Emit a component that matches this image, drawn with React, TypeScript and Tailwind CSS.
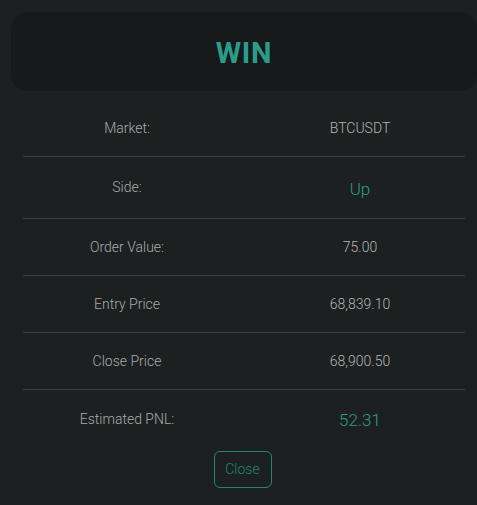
import React from 'react';

const rows: { label: string; value: string; accent?: boolean; h: string }[] = [
    { label: 'Market:', value: 'BTCUSDT', h: 'h-[56px]' },
    { label: 'Side:', value: 'Up', accent: true, h: 'h-[62px]' },
    { label: 'Order Value:', value: '75.00', h: 'h-[57px]' },
    { label: 'Entry Price', value: '68,839.10', h: 'h-[57px]' },
    { label: 'Close Price', value: '68,900.50', h: 'h-[57px]' },
    { label: 'Estimated PNL:', value: '52.31', accent: true, h: 'h-[58px]' },
];

const App: React.FC = () => {
    return (
        <div className="w-[477px] h-[505px] bg-[#1d2021] font-['Roboto',sans-serif] overflow-hidden">
            <div className="pt-3 pl-[11px]">
                <div className="h-[79px] rounded-2xl bg-[#18191a] flex items-center justify-center pt-1">
                    <span className="text-[29px] font-bold text-[#2a9d8a] tracking-wide">WIN</span>
                </div>
            </div>
            <div className="mx-[23px] w-[442px] mt-[10px]">
                {rows.map((r, i) => (
                    <div
                        key={r.label}
                        className={`grid grid-cols-[208px_1fr] items-center ${r.h} ${i < rows.length - 1 ? 'border-b border-[#3b3e3f]' : ''}`}
                    >
                        <div className="text-center text-[14px] text-[#a9aaaa] font-light">{r.label}</div>
                        <div
                            className={
                                r.accent
                                    ? 'text-center pl-6 text-[17px] text-[#2a9d8a] font-light pt-1'
                                    : 'text-center pl-6 text-[14px] text-[#b5b5b5] font-light'
                            }
                        >
                            {r.value}
                        </div>
                    </div>
                ))}
            </div>
            <div className="flex justify-center mt-[3px] pl-2">
                <button className="w-[58px] h-[37px] border border-[#24866f] rounded-md text-[14px] text-[#24866f] font-light bg-transparent">
                    Close
                </button>
            </div>
        </div>
    );
};

export default App;
